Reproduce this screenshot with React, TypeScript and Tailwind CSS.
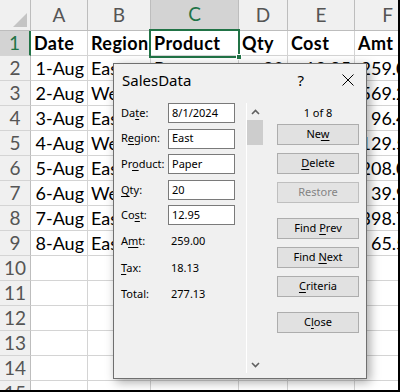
import React from 'react';

const cols = ['A', 'B', 'C', 'D', 'E', 'F'];

type Cell = { v: string; align?: 'l' | 'r'; bold?: boolean };

const rows: Cell[][] = [
  [
    { v: 'Date', bold: true },
    { v: 'Region', bold: true },
    { v: 'Product', bold: true },
    { v: 'Qty', bold: true },
    { v: 'Cost', bold: true },
    { v: 'Amt', bold: true },
  ],
  ...[
    ['1-Aug', 'East', 'Paper', '20', '12.95', '259.00'],
    ['2-Aug', 'West', 'Pens', '45', '12.65', '569.25'],
    ['3-Aug', 'East', 'Binders', '8', '12.06', '96.48'],
    ['4-Aug', 'West', 'Paper', '10', '12.95', '129.50'],
    ['5-Aug', 'East', 'Pens', '16', '13.00', '208.00'],
    ['6-Aug', 'West', 'Pens', '3', '13.30', '39.90'],
    ['7-Aug', 'East', 'Paper', '30', '13.29', '398.70'],
    ['8-Aug', 'East', 'Binders', '5', '13.10', '65.50'],
  ].map((r) =>
    r.map((v, i): Cell => ({ v, align: i === 1 || i === 2 ? 'l' : 'r' }))
  ),
  ...Array.from({ length: 6 }, () => Array.from({ length: 6 }, (): Cell => ({ v: '' }))),
];

const sheetFont = { fontFamily: 'Lato, "Liberation Sans", sans-serif' };
const uiFont = { fontFamily: '"Noto Sans", "Open Sans", sans-serif' };

const Btn = ({ children, disabled = false, className = '' }: { children: React.ReactNode; disabled?: boolean; className?: string }) => (
  <div
    className={`w-[82px] h-[21px] flex items-center justify-center border text-[11px] ${
      disabled ? 'bg-[#e3e3e3] border-[#bfbfbf] text-[#838383]' : 'bg-[#e1e1e1] border-[#adadad] text-black'
    } ${className}`}
  >
    <span className="whitespace-pre">{children}</span>
  </div>
);

const U = ({ children }: { children: React.ReactNode }) => (
  <span className="underline decoration-1 underline-offset-2">{children}</span>
);

const Field = ({ label, value, input = true }: { label: React.ReactNode; value: string; input?: boolean }) => (
  <div className="flex items-center h-[20px]">
    <div className="w-[47px] text-[11px] text-black">{label}</div>
    {input ? (
      <div className="w-[67px] h-[20px] border border-[#7a7a7a] bg-white pl-[3px] flex items-center text-[11px] text-black">
        {value}
      </div>
    ) : (
      <div className="pl-[3px] text-[11px] text-black">{value}</div>
    )}
  </div>
);

export default function App() {
  return (
    <div className="w-[400px] h-[392px] border-r-2 border-b-2 border-black bg-white overflow-hidden">
      <div className="relative w-full h-full overflow-hidden" style={sheetFont}>
        <div className="grid grid-cols-[31px_57px_63px_88px_49px_67px_66px] auto-rows-[25px] grid-rows-[31px] w-max">
          {/* corner */}
          <div className="relative bg-[#f0f0f0] border-r border-b border-[#bdbdbd]">
            <svg className="absolute left-0 top-0" width="30" height="30">
              <polygon points="27,13 27,27 13,27" fill="#c4c4c4" />
            </svg>
          </div>
          {cols.map((c) => (
            <div
              key={c}
              className={`flex items-center justify-center text-[19px] border-r ${
                c === 'C'
                  ? 'bg-[#d3d3d3] text-[#217346] border-b-2 border-b-[#217346] border-r-[#bdbdbd]'
                  : 'bg-[#f0f0f0] text-[#555] border-b border-[#bdbdbd]'
              }`}
            >
              {c}
            </div>
          ))}
          {rows.map((r, ri) => (
            <React.Fragment key={ri}>
              <div
                className={`flex items-center justify-center text-[19px] border-b border-b-[#d4d4d4] ${
                  ri === 0
                    ? 'bg-[#d3d3d3] text-[#217346] border-r-2 border-r-[#217346]'
                    : 'bg-[#f0f0f0] text-[#555] border-r border-r-[#bdbdbd]'
                }`}
              >
                {ri + 1}
              </div>
              {r.map((cell, ci) => (
                <div
                  key={ci}
                  className={`flex items-end pb-[1px] text-[18px] leading-[22px] text-black border-r border-b border-[#d4d4d4] whitespace-nowrap overflow-hidden ${
                    cell.align === 'r' ? 'justify-end pr-[3px]' : 'justify-start pl-[3px]'
                  } ${cell.bold ? 'font-bold tracking-[0.4px]' : ''}`}
                >
                  {cell.v}
                </div>
              ))}
            </React.Fragment>
          ))}
        </div>

        {/* selected cell C1 */}
        <div className="absolute left-[149px] top-[29px] w-[91px] h-[29px] border-2 border-[#217346]" />
        <div className="absolute left-[236px] top-[54px] w-[6px] h-[6px] bg-[#217346] border border-white" />

        {/* data form dialog */}
        <div
          className="absolute left-[113px] top-[63px] w-[254px] h-[316px] border border-[#6f6f6f] bg-[#f0f0f0] shadow-[3px_3px_10px_rgba(0,0,0,0.35)] flex flex-col"
          style={uiFont}
        >
          <div className="h-[32px] flex items-center pl-[8px] pr-[12px] text-black">
            <span className="text-[15px] flex-1">SalesData</span>
            <span className="text-[15px] mr-[38px]">?</span>
            <svg width="12" height="12" viewBox="0 0 12 12">
              <path d="M0.5 0.5 L11.5 11.5 M11.5 0.5 L0.5 11.5" stroke="#000" strokeWidth="1" />
            </svg>
          </div>
          <div className="flex flex-1">
            <div className="w-[132px] pl-[7px] pt-[7px] flex flex-col">
              <div className="flex flex-col gap-[5.6px]">
                <Field label={<>Da<U>t</U>e:</>} value="8/1/2024" />
                <Field label={<>R<U>e</U>gion:</>} value="East" />
                <Field label={<>Pr<U>o</U>duct:</>} value="Paper" />
                <Field label={<><U>Q</U>ty:</>} value="20" />
                <Field label={<>Co<U>s</U>t:</>} value="12.95" />
              </div>
              <div className="flex flex-col gap-[6.5px] mt-[6px]">
                <Field label={<>A<U>m</U>t:</>} value="259.00" input={false} />
                <Field label={<><U>T</U>ax:</>} value="18.13" input={false} />
                <Field label="Total:" value="277.13" input={false} />
              </div>
            </div>
            <div className="w-[17px] mt-[7px] mb-[5px] border-l border-white flex flex-col items-stretch">
              <div className="h-[17px] flex items-center justify-center">
                <svg width="9" height="6" viewBox="0 0 9 6">
                  <path d="M1 5 L4.5 1.5 L8 5" fill="none" stroke="#606060" strokeWidth="1.6" />
                </svg>
              </div>
              <div className="h-[25px] bg-[#cdcdcd]" />
              <div className="flex-1" />
              <div className="h-[17px] flex items-center justify-center">
                <svg width="9" height="6" viewBox="0 0 9 6">
                  <path d="M1 1 L4.5 4.5 L8 1" fill="none" stroke="#606060" strokeWidth="1.6" />
                </svg>
              </div>
            </div>
            <div className="flex-1 pl-[14px] pt-[7px] flex flex-col text-black">
              <div className="w-[82px] h-[20px] flex items-center justify-center text-[11px]">1 of 8</div>
              <Btn className="mt-[1px]">Ne<U>w</U></Btn>
              <Btn className="mt-[8px]"><U>D</U>elete</Btn>
              <Btn className="mt-[8px]" disabled>Restore</Btn>
              <Btn className="mt-[15px]">Find <U>P</U>rev</Btn>
              <Btn className="mt-[8px]">Find <U>N</U>ext</Btn>
              <Btn className="mt-[8px]"><U>C</U>riteria</Btn>
              <Btn className="mt-[15px]">C<U>l</U>ose</Btn>
            </div>
          </div>
        </div>
      </div>
    </div>
  );
}
